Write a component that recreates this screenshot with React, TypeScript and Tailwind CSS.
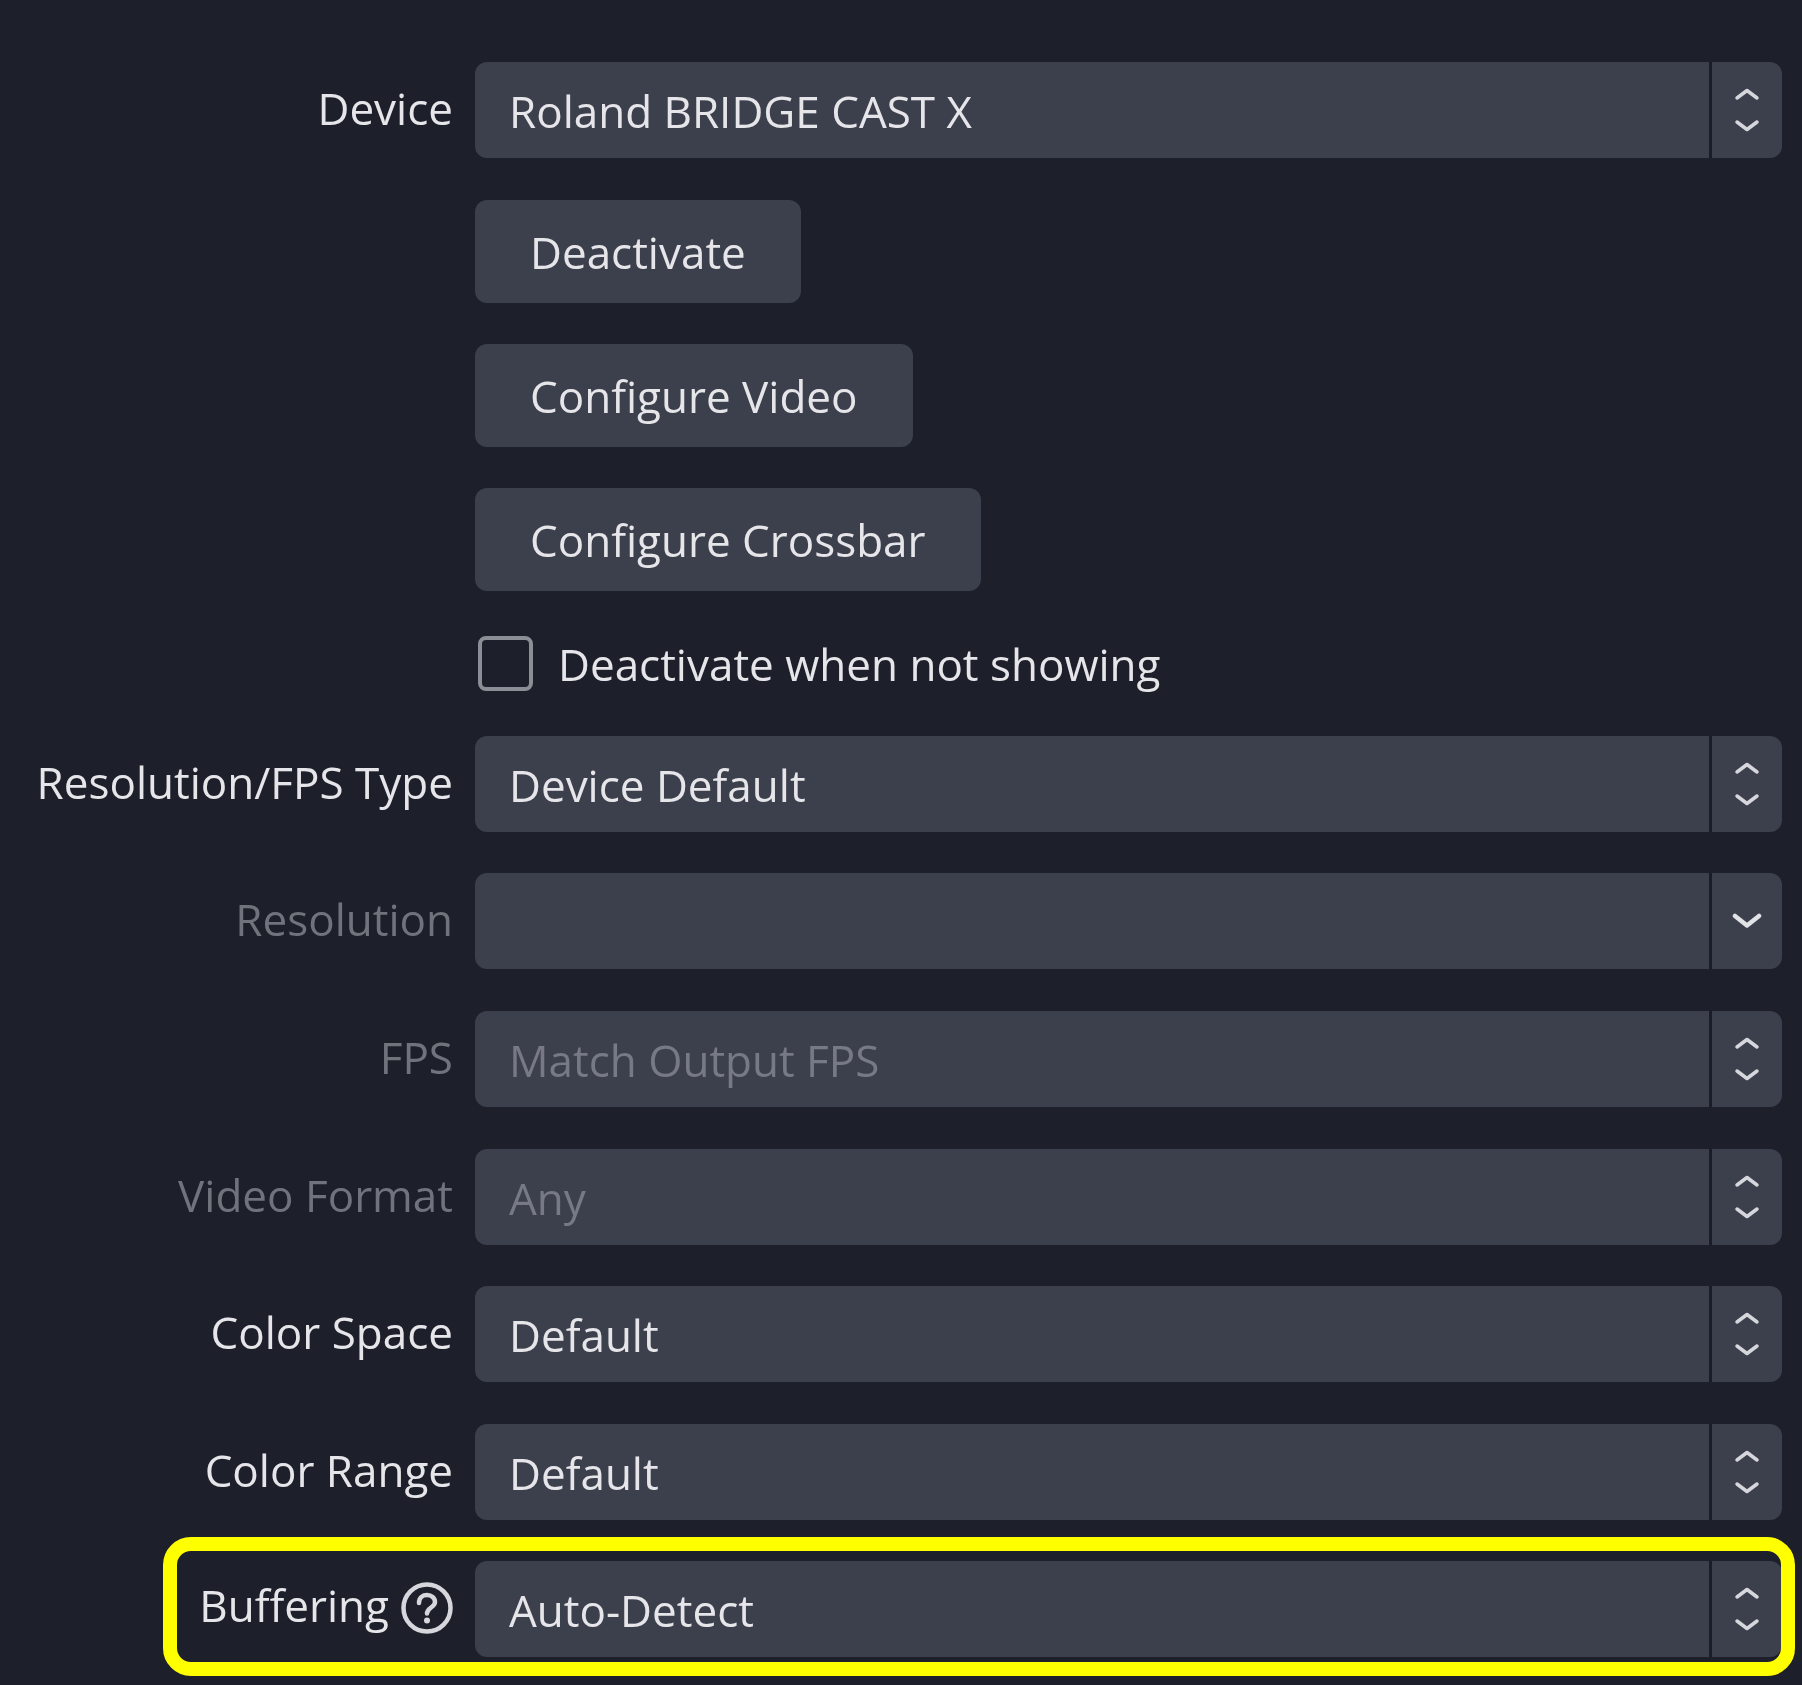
import React from "react";

const UpDown = () => (
  <svg width="26" height="46" viewBox="0 0 26 46" fill="none" stroke="#d6d7dc" strokeWidth="3.5" strokeLinecap="round" strokeLinejoin="round">
    <path d="M3 11 L13 3.5 L23 11" />
    <path d="M3 35 L13 42.5 L23 35" />
  </svg>
);

const Down = () => (
  <svg width="30" height="18" viewBox="0 0 30 18" fill="none" stroke="#e2e3e7" strokeWidth="4.5" strokeLinecap="round" strokeLinejoin="round">
    <path d="M3 4 L15 13.5 L27 4" />
  </svg>
);

const Help = () => (
  <svg width="52" height="52" viewBox="0 0 52 52" fill="none" stroke="#d6d7dc" strokeWidth="4.5">
    <circle cx="26" cy="26" r="23.5" />
    <path d="M18 21 C18 15.5 22 13 26 13 C30.5 13 34 16 34 20 C34 25.5 26 25.5 26 31.5" strokeLinecap="round" />
    <circle cx="26" cy="38.5" r="3" fill="#d6d7dc" stroke="none" />
  </svg>
);

function Row({ label, value, disabled, single, className, labelClass, children }: { label: React.ReactNode; value?: string; disabled?: boolean; single?: boolean; className?: string; labelClass?: string; children?: React.ReactNode }) {
  return (
    <div className={"relative flex items-center h-[96px] " + (className ?? "")}>
      {children}
      <div className={"w-[453px] shrink-0 flex items-center justify-end gap-[12px] " + (labelClass ?? "pb-[5px] ") + (disabled ? "text-[#70727c]" : "text-[#e6e6ea]")}>
        {label}
      </div>
      <div className="ml-[22px] flex-1 flex h-full">
        <div className={"flex-1 flex items-center pl-[34px] pt-[1px] rounded-l-[12px] bg-[#3c3f4c] " + (disabled ? "text-[#777985]" : "text-[#e6e6ea]")}>
          {value}
        </div>
        <div className="w-[3px] bg-[#1a1c26]" />
        <div className="w-[70px] flex items-center justify-center rounded-r-[12px] bg-[#3c3f4c]">
          {single ? <Down /> : <UpDown />}
        </div>
      </div>
    </div>
  );
}

function Btn({ label, className }: { label: string; className?: string }) {
  return (
    <div className={"ml-[475px] w-fit h-[103px] flex items-center px-[55px] rounded-[12px] bg-[#3c3f4c] text-[#e6e6ea] " + (className ?? "")}>
      {label}
    </div>
  );
}

export default function App() {
  return (
    <div className="w-[1802px] h-[1685px] overflow-hidden bg-[#1d1f2a] pt-[62px] pr-[20px] text-[44px] leading-none font-['Open_Sans',sans-serif] blur-[0.6px]">
      <Row label="Device" value="Roland BRIDGE CAST X" />
      <Btn label="Deactivate" className="mt-[42px]" />
      <Btn label="Configure Video" className="mt-[41px]" />
      <Btn label="Configure Crossbar" className="mt-[41px]" />
      <div className="ml-[478px] mt-[45px] h-[55px] flex items-center text-[#e6e6ea]">
        <div className="w-[55px] h-[55px] rounded-[8px] border-[4px] border-[#8c8e96]" />
        <span className="ml-[25px] pt-[1px]">Deactivate when not showing</span>
      </div>
      <Row label="Resolution/FPS Type" value="Device Default" className="mt-[45px]" />
      <Row label="Resolution" disabled single className="mt-[41px]" />
      <Row label="FPS" value="Match Output FPS" disabled className="mt-[42px]" />
      <Row label="Video Format" value="Any" disabled className="mt-[42px]" />
      <Row label="Color Space" value="Default" className="mt-[41px]" />
      <Row label="Color Range" value="Default" className="mt-[42px]" />
      <Row
        label={<><span className="pb-[6px]">Buffering</span><Help /></>}
        value="Auto-Detect"
        className="mt-[41px]"
        labelClass="pb-[2px] "
      >
        <div className="absolute left-[163px] right-[-13px] top-[-24px] bottom-[-19px] rounded-[28px] border-[14px] border-[#ffff00]" />
      </Row>
    </div>
  );
}
